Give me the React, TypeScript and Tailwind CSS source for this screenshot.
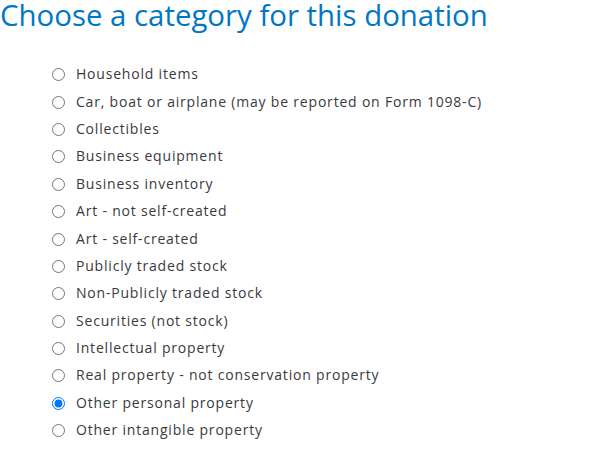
const options = [
  'Household items',
  'Car, boat or airplane (may be reported on Form 1098-C)',
  'Collectibles',
  'Business equipment',
  'Business inventory',
  'Art - not self-created',
  'Art - self-created',
  'Publicly traded stock',
  'Non-Publicly traded stock',
  'Securities (not stock)',
  'Intellectual property',
  'Real property - not conservation property',
  'Other personal property',
  'Other intangible property',
];

export default function App() {
  const selected = 'Other personal property';

  return (
    <div className="w-[598px] h-[461px] bg-white overflow-hidden" style={{ fontFamily: '"Open Sans", sans-serif' }}>
      <h1 className="text-[29.4px] leading-[30px] text-[#0077c5] font-normal">
        Choose a category for this donation
      </h1>

      <div className="mt-[30px] pl-[52px] flex flex-col">
        {options.map((opt) => (
          <label key={opt} className="flex items-center h-[27.4px] gap-[11px] text-[14px] tracking-[0.8px] text-[#393a3d]">
            <input
              type="radio"
              name="category"
              defaultChecked={opt === selected}
              className="m-0 w-[13px] h-[13px] translate-y-[1px]"
            />
            <span>{opt}</span>
          </label>
        ))}
      </div>
    </div>
  );
}
